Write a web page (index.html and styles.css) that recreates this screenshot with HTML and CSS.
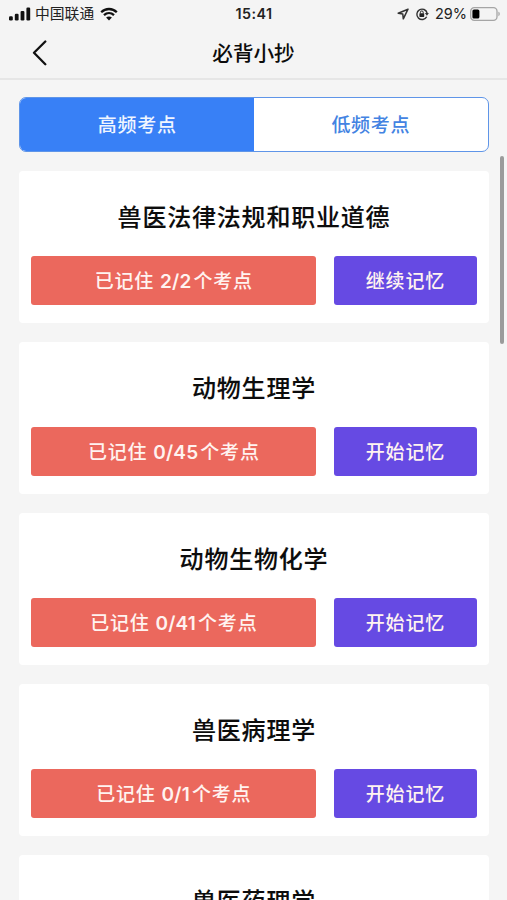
FILE: index.html
```html
<!DOCTYPE html>
<html lang="zh-CN">
<head>
    <meta charset="UTF-8">
    <meta name="viewport" content="width=device-width, initial-scale=1.0">
    <title>必背小抄</title>
    <link rel="stylesheet" href="styles.css">
</head>
<body>
    <header class="header">
        <div class="status-bar">
            <div class="status-left">
                <svg class="signal" width="22" height="14" viewBox="0 0 22 14">
                    <rect x="0" y="9.3" width="3.8" height="4.2" rx="1.2"/>
                    <rect x="5.8" y="6.8" width="3.8" height="6.7" rx="1.2"/>
                    <rect x="11.6" y="3.9" width="3.8" height="9.6" rx="1.2"/>
                    <rect x="17.4" y="0.6" width="3.8" height="12.9" rx="1.2"/>
                </svg>
                <span class="carrier">中国联通</span>
                <svg class="wifi" width="18" height="14" viewBox="0 0 18 14">
                    <path d="M1.2 5.2C5.6 0.9 12.4 0.9 16.8 5.2M4 8.2c2.9-2.7 7.1-2.7 10 0" fill="none" stroke="#111" stroke-width="2.3"/>
                    <path d="M9 13.4l-2.9-2.9c1.6-1.5 4.2-1.5 5.8 0z" fill="#111"/>
                </svg>
            </div>
            <span class="time">15:41</span>
            <div class="status-right">
                <svg class="location" width="12" height="12" viewBox="0 0 12 12">
                    <path d="M11 1.2L1.2 5.3l4.6.8.5 4.7z" fill="none" stroke="#333" stroke-width="1.5" stroke-linejoin="round"/>
                </svg>
                <svg class="rotate-lock" width="14" height="14" viewBox="0 0 14 14">
                    <path d="M11.7 9.7A5.2 5.2 0 1 1 12.1 6" fill="none" stroke="#333" stroke-width="1.4"/>
                    <path d="M9.9 6h4l-2 2.8z" fill="#333"/>
                    <rect x="4.4" y="6.2" width="4.8" height="3.7" rx=".6" fill="#222"/>
                    <path d="M5.4 6.4V5.3a1.4 1.4 0 0 1 2.8 0v1.1" fill="none" stroke="#222"/>
                </svg>
                <span class="percent">29%</span>
                <svg class="battery" width="31" height="14" viewBox="0 0 31 14">
                    <rect x=".7" y=".7" width="26.3" height="12.6" rx="3.6" fill="none" stroke="#a5a5a5" stroke-width="1.3"/>
                    <rect x="2.4" y="2.4" width="7" height="9.2" rx="1.6" fill="#000"/>
                    <path d="M28.4 4.8c1.8.6 1.8 3.8 0 4.4z" fill="#a5a5a5"/>
                </svg>
            </div>
        </div>
        <div class="nav-bar">
            <svg class="back" width="16" height="26" viewBox="0 0 16 26">
                <path d="M13.3 1.5L2 12.8l11.3 11.4" fill="none" stroke="#111" stroke-width="2.3" stroke-linecap="round" stroke-linejoin="round"/>
            </svg>
            <h1>必背小抄</h1>
        </div>
    </header>

    <main class="container">
        <div class="tabs">
            <div class="tab active">高频考点</div>
            <div class="tab">低频考点</div>
        </div>

        <div class="card">
            <h2>兽医法律法规和职业道德</h2>
            <div class="actions">
                <div class="btn progress">已记住 <b>2/2</b>个考点</div>
                <div class="btn start">继续记忆</div>
            </div>
        </div>
        <div class="card">
            <h2>动物生理学</h2>
            <div class="actions">
                <div class="btn progress">已记住 <b>0/45</b>个考点</div>
                <div class="btn start">开始记忆</div>
            </div>
        </div>
        <div class="card">
            <h2>动物生物化学</h2>
            <div class="actions">
                <div class="btn progress">已记住 <b>0/41</b>个考点</div>
                <div class="btn start">开始记忆</div>
            </div>
        </div>
        <div class="card">
            <h2>兽医病理学</h2>
            <div class="actions">
                <div class="btn progress">已记住 <b>0/1</b>个考点</div>
                <div class="btn start">开始记忆</div>
            </div>
        </div>
        <div class="card">
            <h2>兽医药理学</h2>
        </div>
    </main>
    <div class="scrollbar"></div>
</body>
</html>
```

FILE: styles.css
```css
* {
    box-sizing: border-box;
}
body {
    margin: 0;
    height: 900px;
    overflow: hidden;
    background-color: #f5f5f5;
    font-family: Inter, "Noto Sans CJK SC", sans-serif;
    color: #0c0c0c;
}
.header {
    height: 80px;
    background-color: #f4f4f4;
    border-bottom: 2px solid #e6e6e6;
}
.status-bar {
    display: grid;
    grid-template-columns: 1fr auto 1fr;
    align-items: center;
    height: 27px;
    padding: 0 6px 0 9px;
    font-size: 14px;
    line-height: 26px;
}
.status-left, .status-right {
    display: flex;
    align-items: center;
}
.status-right {
    justify-content: flex-end;
}
.signal {
    fill: #111;
}
.carrier {
    margin: 0 6px 0 4px;
    font-size: 14.8px;
    color: #222;
}
.time {
    font-size: 14.3px;
    font-weight: 600;
    letter-spacing: 0.5px;
    margin-right: 2px;
    color: #222;
}
.rotate-lock {
    margin: 0 6px;
}
.percent {
    font-size: 14.5px;
    color: #222;
    margin-right: 3px;
}
/* 導航欄 */
.nav-bar {
    display: grid;
    grid-template-columns: 1fr auto 1fr;
    align-items: center;
    height: 50px;
    padding: 0 32px;
}
.nav-bar h1 {
    margin: 0;
    font-size: 20.6px;
    line-height: 50px;
    padding-top: 2px;
    font-weight: 500;
}
.container {
    display: flex;
    flex-direction: column;
    gap: 18.6px;
    padding: 17px 18.4px 0 19.4px;
}
.tabs {
    display: flex;
    height: 55px;
    flex-shrink: 0;
    border: 1.5px solid #5f95e8;
    border-radius: 7px;
    background-color: #fff;
    overflow: hidden;
}
.tab {
    flex: 1;
    text-align: center;
    font-size: 19px;
    letter-spacing: 0.7px;
    line-height: 56px;
    font-weight: 500;
    color: #4383e2;
}
.tab.active {
    background-color: #3880f6;
    color: #f0f6ff;
}
.card {
    height: 152.4px;
    flex-shrink: 0;
    padding: 24px 12px 0;
    background-color: #fff;
    border-radius: 4px;
}
.card h2 {
    margin: 0 0 16.4px;
    font-size: 24px;
    line-height: 45px;
    letter-spacing: 0.8px;
    font-weight: 500;
    text-align: center;
    -webkit-text-stroke: 0.1px #0c0c0c;
}
.actions {
    display: flex;
    gap: 18px;
}
.btn {
    height: 49px;
    border-radius: 3px;
    color: #fff3f0;
    font-size: 19px;
    letter-spacing: 0.8px;
    line-height: 52px;
    font-weight: 500;
    text-align: center;
}
.btn b {
    margin-right: 2px;
    font-weight: 600;
    letter-spacing: 0.2px;
}
.progress {
    flex: 2;
    background-color: #eb685d;
}
.start {
    flex: 1;
    background-color: #664ae3;
}
/* 滾動條浮在內容上方 */
.scrollbar {
    position: absolute;
    top: 156px;
    right: 3px;
    width: 4px;
    height: 188px;
    border-radius: 2px;
    background-color: #9b9b9b;
}
```
